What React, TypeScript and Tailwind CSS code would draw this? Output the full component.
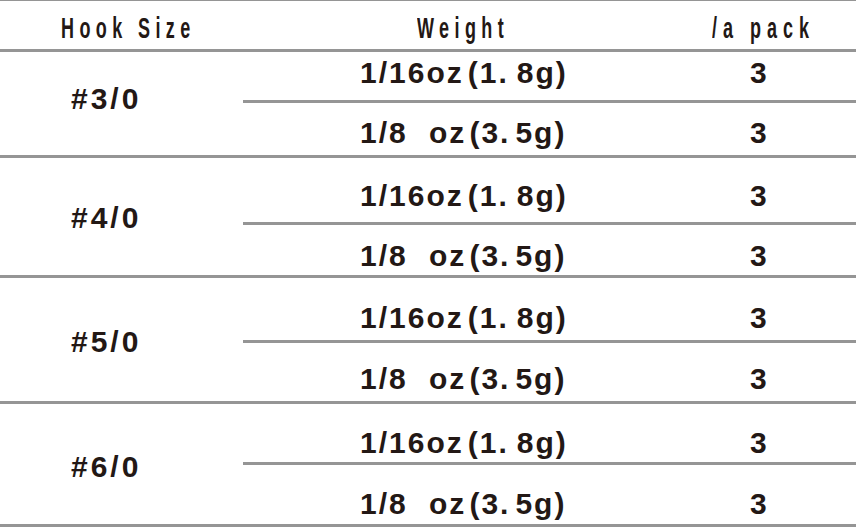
import React from "react";

interface Row {
  weight: React.ReactNode;
  pack: string;
  h: string;
  pad: string;
}

interface Group {
  hook: string;
  hookPad: string;
  rows: Row[];
}

// spacing mimics the full-width brackets / period of the printed table
const w16 = (
  <span>
    1/16oz<span className="ml-[4px]">(</span>1.<span className="ml-[8px]">8g)</span>
  </span>
);
const w8 = (
  <span>
    1/8 <span className="ml-[11px]">oz</span>
    <span className="ml-[3px]">(</span>3.<span className="ml-[5px]">5g)</span>
  </span>
);

const groups: Group[] = [
  {
    hook: "#3/0",
    hookPad: "pt-[32px]",
    rows: [
      { weight: w16, pack: "3", h: "h-[51px]", pad: "pt-[6px]" },
      { weight: w8, pack: "3", h: "h-[52px]", pad: "pt-[15px]" },
    ],
  },
  {
    hook: "#4/0",
    hookPad: "pt-[45px]",
    rows: [
      { weight: w16, pack: "3", h: "h-[67px]", pad: "pt-[23px]" },
      { weight: w8, pack: "3", h: "h-[50px]", pad: "pt-[16px]" },
    ],
  },
  {
    hook: "#5/0",
    hookPad: "pt-[49px]",
    rows: [
      { weight: w16, pack: "3", h: "h-[65px]", pad: "pt-[25px]" },
      { weight: w8, pack: "3", h: "h-[58px]", pad: "pt-[21px]" },
    ],
  },
  {
    hook: "#6/0",
    hookPad: "pt-[48px]",
    rows: [
      { weight: w16, pack: "3", h: "h-[61px]", pad: "pt-[24px]" },
      { weight: w8, pack: "3", h: "h-[59px]", pad: "pt-[24px]" },
    ],
  },
];

const HookTable = () => {
  return (
    <div className="w-[856px] h-[528px] bg-white text-[#231815] font-['Liberation_Sans',Arial,sans-serif] font-bold text-[30px] leading-none overflow-hidden">
      {/* header */}
      <div className="flex h-[52px] border-t border-b-[3px] border-[#959595]">
        <div className="w-[243px] shrink-0 pl-[61px] pt-[12px]">
          <span className="inline-block origin-left scale-x-[0.6] tracking-[9px] whitespace-nowrap">
            Hook Size
          </span>
        </div>
        <div className="w-[417px] shrink-0 pl-[174px] pt-[12px]">
          <span className="inline-block origin-left scale-x-[0.6] tracking-[9px] whitespace-nowrap">
            Weight
          </span>
        </div>
        <div className="flex-1 min-w-0 pl-[52px] pt-[12px]">
          <span className="inline-block origin-left scale-x-[0.6] tracking-[10px] whitespace-nowrap">
            /a pack
          </span>
        </div>
      </div>

      {groups.map((g) => (
        <div key={g.hook} className="flex border-b-[3px] border-[#959595]">
          <div className={`w-[243px] shrink-0 pl-[71px] tracking-[3px] ${g.hookPad}`}>{g.hook}</div>
          <div className="flex-1 min-w-0 flex flex-col">
            {g.rows.map((r, idx) => (
              <div
                key={idx}
                className={`flex ${r.h} ${idx === 0 ? "border-b-[3px] border-[#959595]" : ""}`}
              >
                <div className={`w-[417px] shrink-0 pl-[117px] tracking-[2px] whitespace-nowrap ${r.pad}`}>
                  {r.weight}
                </div>
                <div className={`flex-1 min-w-0 pl-[90px] ${r.pad}`}>{r.pack}</div>
              </div>
            ))}
          </div>
        </div>
      ))}
    </div>
  );
};

export default function App() {
  return <HookTable />;
}
